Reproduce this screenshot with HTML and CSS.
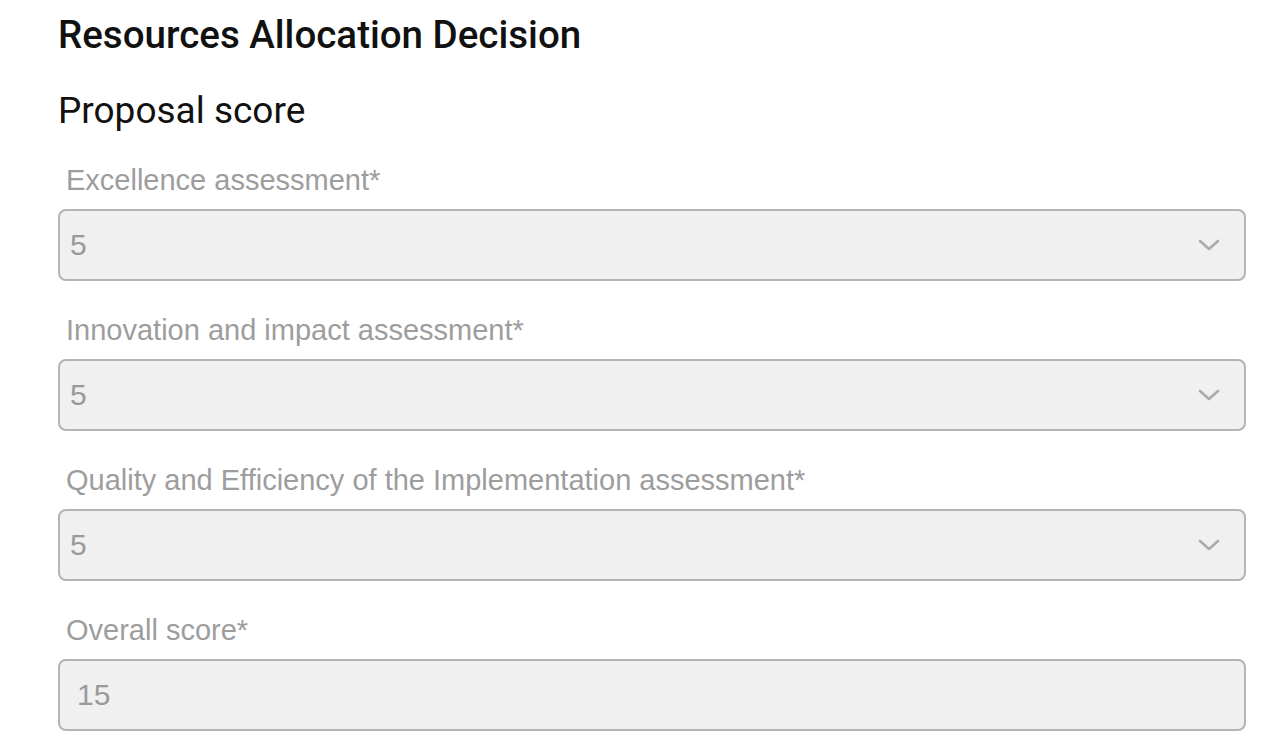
FILE: index.html
```html
<!DOCTYPE html>
<html lang="en">
<head>
<meta charset="utf-8">
<title>Resources Allocation Decision</title>
<link rel="stylesheet" href="styles.css">
</head>
<body>
<main class="page">
  <h1 class="title">Resources Allocation Decision</h1>
  <h2 class="subtitle">Proposal score</h2>
  <div class="fields">
    <div class="field">
      <label class="label">Excellence assessment*</label>
      <div class="box select">
        <span class="value">5</span>
        <svg class="chevron" width="22" height="12" viewBox="0 0 22 12"><polyline points="2,2 11,10 20,2" fill="none" stroke="#ababab" stroke-width="2.6" stroke-linecap="round" stroke-linejoin="round"/></svg>
      </div>
    </div>
    <div class="field">
      <label class="label">Innovation and impact assessment*</label>
      <div class="box select">
        <span class="value">5</span>
        <svg class="chevron" width="22" height="12" viewBox="0 0 22 12"><polyline points="2,2 11,10 20,2" fill="none" stroke="#ababab" stroke-width="2.6" stroke-linecap="round" stroke-linejoin="round"/></svg>
      </div>
    </div>
    <div class="field">
      <label class="label">Quality and Efficiency of the Implementation assessment*</label>
      <div class="box select">
        <span class="value">5</span>
        <svg class="chevron" width="22" height="12" viewBox="0 0 22 12"><polyline points="2,2 11,10 20,2" fill="none" stroke="#ababab" stroke-width="2.6" stroke-linecap="round" stroke-linejoin="round"/></svg>
      </div>
    </div>
    <div class="field">
      <label class="label">Overall score*</label>
      <div class="box input">
        <span class="value">15</span>
      </div>
    </div>
  </div>
</main>
</body>
</html>
```
FILE: styles.css
```css
html, body {
  margin: 0;
  padding: 0;
  background: #ffffff;
}
.page {
  padding: 13px 34px 0 58px;
  display: flex;
  flex-direction: column;
}
.title {
  margin: 0;
  font-family: Roboto, "Liberation Sans", sans-serif;
  font-weight: 500;
  font-size: 38.5px;
  line-height: 44px;
  color: #111;
}
.subtitle {
  margin: 32px 0 0 0;
  font-family: Roboto, "Liberation Sans", sans-serif;
  font-weight: 400;
  font-size: 37px;
  line-height: 44px;
  color: #111;
}
.fields {
  margin-top: 31px;
  display: flex;
  flex-direction: column;
  gap: 33px;
}
.field {
  display: flex;
  flex-direction: column;
  gap: 13px;
}
.label {
  padding-left: 8px;
  font-family: "Liberation Sans", Arial, sans-serif;
  font-size: 29px;
  line-height: 32px;
  color: #9d9d9d;
}
.box {
  box-sizing: border-box;
  height: 72px;
  border: 2px solid #b4b4b4;
  border-radius: 8px;
  background: #eff0ef;
  display: flex;
  align-items: center;
  justify-content: space-between;
  padding: 0 24px 0 10px;
}
.box.input {
  padding-left: 17px;
}
.value {
  font-family: "Liberation Sans", Arial, sans-serif;
  font-size: 30px;
  color: #9a9a9a;
}
.chevron {
  display: block;
}
```
